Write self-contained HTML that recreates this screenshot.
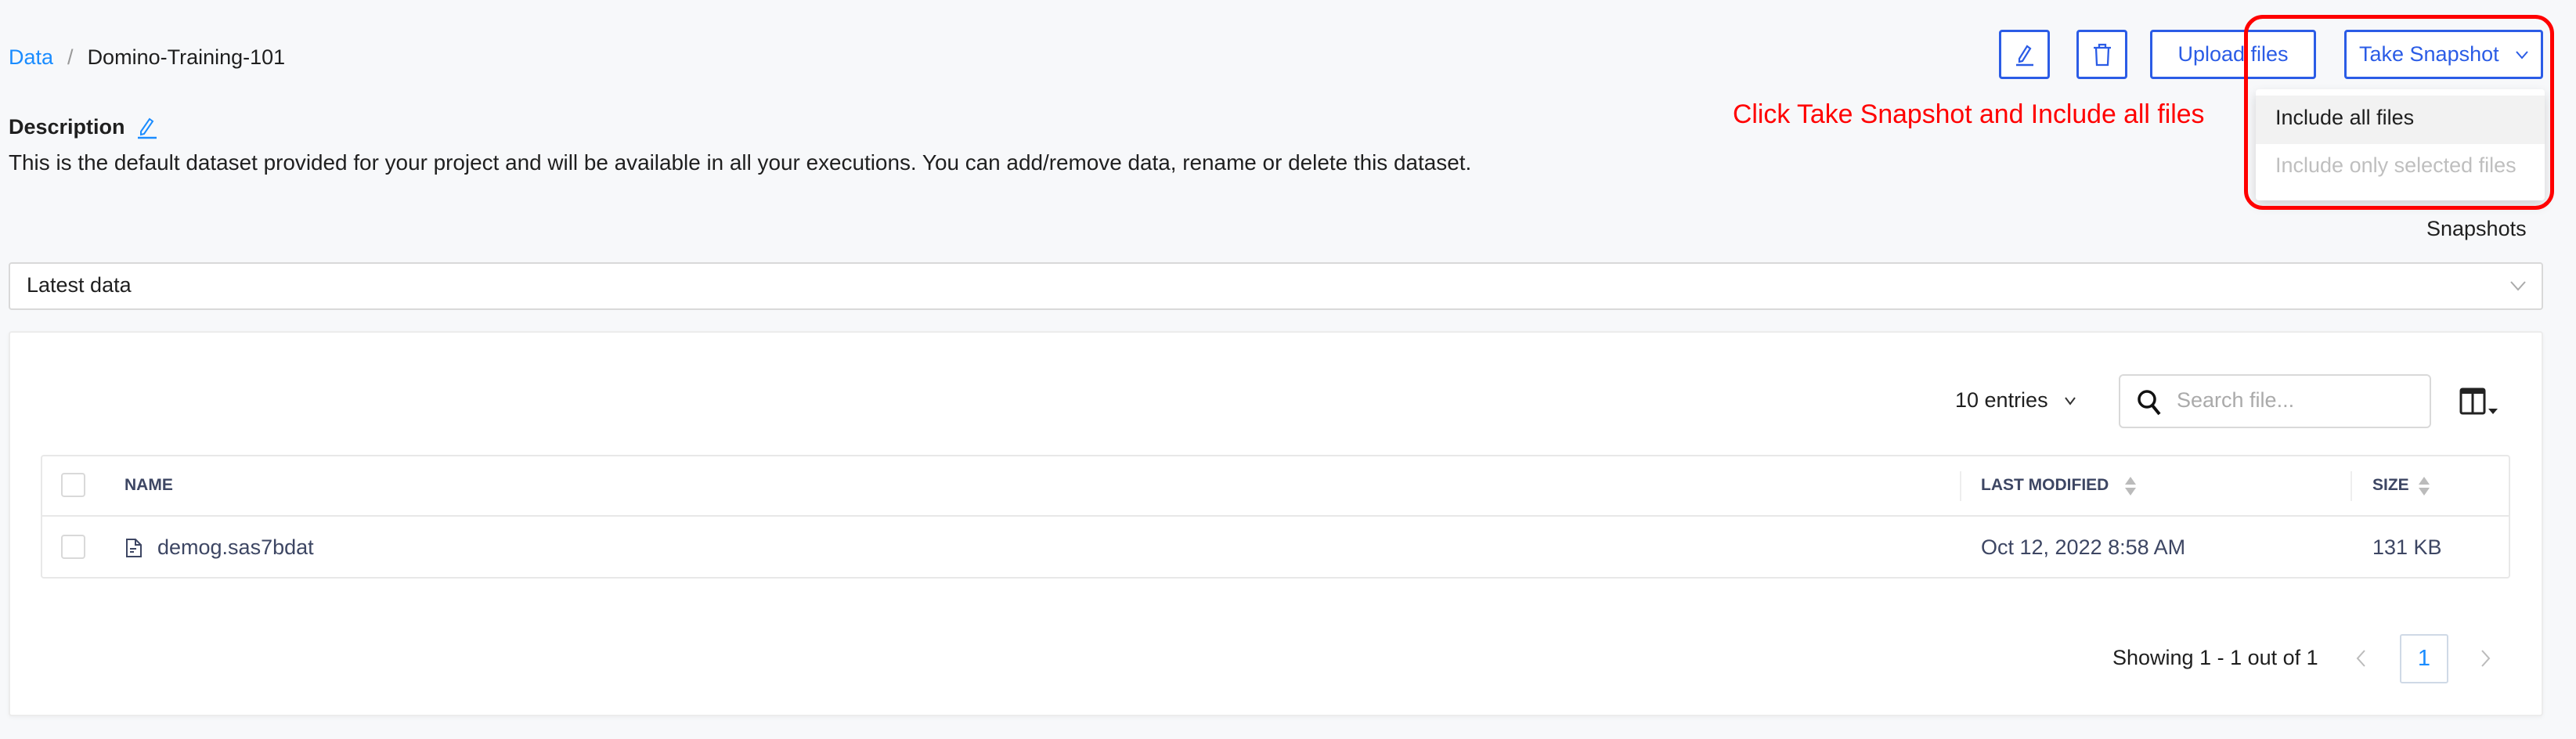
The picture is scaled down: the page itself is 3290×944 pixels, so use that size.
<!DOCTYPE html>
<html><head><meta charset="utf-8"><style>
*{box-sizing:border-box;margin:0;padding:0}
body{width:3290px;height:944px;background:#f7f8fa;font-family:"Liberation Sans",sans-serif;color:#1f1f1f;position:relative;overflow:hidden}
.a{position:absolute;white-space:nowrap}
.btn{position:absolute;border:3px solid #2b5ce6;border-radius:4px;background:#fff;color:#2b5ce6;font-size:27px;display:flex;align-items:center;justify-content:center}
.cb{position:absolute;width:31px;height:31px;border:2px solid #d9d9d9;border-radius:4px;background:#fff}
.th{font-size:21px;font-weight:bold;color:#3d4663}
.td{font-size:27px;color:#3d4663}
</style></head><body>
<div class="a" style="left:11px;top:58px;font-size:27px"><span style="color:#1a8cff">Data</span><span style="color:#999;margin:0 18px">/</span>Domino-Training-101</div>
<div class="a" style="left:11px;top:147px;font-size:27px;font-weight:bold">Description</div>
<svg class="a" style="left:174px;top:148px" width="28" height="30" viewBox="0 0 28 30"><path d="M6 20 L17 4 L21 7 L10 23 L6 24Z" fill="none" stroke="#1a8cff" stroke-width="2"/><path d="M2 28H26" stroke="#1a8cff" stroke-width="2.5"/></svg>
<div class="a" style="left:11px;top:192px;font-size:27.9px">This is the default dataset provided for your project and will be available in all your executions. You can add/remove data, rename or delete this dataset.</div>

<div class="btn" style="left:2553px;top:38px;width:65px;height:63px"><svg width="28" height="30" viewBox="0 0 28 30"><path d="M7 20 L17 4 L21 7 L11 23 L7 24Z" fill="none" stroke="#2b5ce6" stroke-width="2.2"/><path d="M3 28H25" stroke="#2b5ce6" stroke-width="2.5"/></svg></div>
<div class="btn" style="left:2652px;top:38px;width:65px;height:63px"><svg width="26" height="32" viewBox="0 0 26 32"><path d="M2 7H24M9 7V3H17V7M5 7L6 29H20L21 7" fill="none" stroke="#2b5ce6" stroke-width="2.3"/></svg></div>
<div class="btn" style="left:2746px;top:38px;width:212px;height:63px">Upload files</div>
<div class="btn" style="left:2994px;top:38px;width:254px;height:63px;justify-content:flex-start;padding-left:16px">Take Snapshot<svg style="margin-left:20px" width="18" height="12" viewBox="0 0 18 12"><path d="M2 2L9 10L16 2" fill="none" stroke="#2b5ce6" stroke-width="2"/></svg></div>

<div class="a" style="left:2213px;top:127px;font-size:33.8px;color:#f00">Click Take Snapshot and Include all files</div>
<div class="a" style="left:2881px;top:114px;width:369px;height:142px;background:#fff;border-radius:4px;box-shadow:0 6px 14px rgba(0,0,0,.15)">
 <div style="position:absolute;left:0;top:8px;width:369px;height:62px;background:#f2f2f2"></div>
 <div class="a" style="left:25px;top:21px;font-size:27px;color:#1f1f1f">Include all files</div>
 <div class="a" style="left:25px;top:82px;font-size:27px;color:#bfbfbf">Include only selected files</div>
</div>
<div class="a" style="left:2866px;top:19px;width:396px;height:249px;border:5px solid #f00;border-radius:24px"></div>
<div class="a" style="left:3099px;top:277px;font-size:27px">Snapshots</div>

<div class="a" style="left:11px;top:335px;width:3237px;height:61px;background:#fff;border:2px solid #d9d9d9;border-radius:4px"></div>
<div class="a" style="left:34px;top:349px;font-size:27px">Latest data</div>
<svg class="a" style="left:3205px;top:358px" width="22" height="14" viewBox="0 0 22 14"><path d="M2 2L11 12L20 2" fill="none" stroke="#aaa" stroke-width="2"/></svg>

<div class="a" style="left:11px;top:423px;width:3237px;height:492px;background:#fff;border:2px solid #ececec;border-radius:4px;box-shadow:0 2px 6px rgba(0,0,0,.04)"></div>
<div class="a" style="left:2497px;top:496px;font-size:27px">10 entries</div>
<svg class="a" style="left:2636px;top:506px" width="16" height="12" viewBox="0 0 16 12"><path d="M2 2L8 10L14 2" fill="none" stroke="#333" stroke-width="2"/></svg>
<div class="a" style="left:2706px;top:478px;width:399px;height:69px;border:2px solid #d9d9d9;border-radius:6px;background:#fff"></div>
<svg class="a" style="left:2728px;top:496px" width="34" height="36" viewBox="0 0 34 36"><circle cx="14" cy="14" r="10" fill="none" stroke="#111" stroke-width="3.5"/><path d="M21 22L30 33" stroke="#111" stroke-width="4"/></svg>
<div class="a" style="left:2780px;top:496px;font-size:27px;color:#aaa">Search file...</div>
<svg class="a" style="left:3141px;top:494px" width="52" height="40" viewBox="0 0 52 40"><rect x="2" y="3" width="30" height="31" rx="2" fill="none" stroke="#222" stroke-width="3"/><rect x="2" y="3" width="30" height="6" fill="#222"/><path d="M17 8V34" stroke="#222" stroke-width="3"/><path d="M37 28H49L43 35Z" fill="#222"/></svg>

<div class="a" style="left:52px;top:581px;width:3154px;height:158px;border:2px solid #e8e8e8;border-radius:4px;background:#fff"></div>
<div class="a" style="left:52px;top:658px;width:3154px;height:2px;background:#e8e8e8"></div>
<div class="cb" style="left:78px;top:604px"></div>
<div class="cb" style="left:78px;top:683px"></div>
<div class="a th" style="left:159px;top:608px">NAME</div>
<div class="a" style="left:2503px;top:602px;width:2px;height:38px;background:#eee"></div>
<div class="a" style="left:3002px;top:602px;width:2px;height:38px;background:#eee"></div>
<div class="a th" style="left:2530px;top:608px">LAST MODIFIED</div>
<svg class="a" style="left:2713px;top:608px" width="16" height="26" viewBox="0 0 16 26"><path d="M8 1L15 11H1Z" fill="#bbb"/><path d="M8 25L15 15H1Z" fill="#bbb"/></svg>
<div class="a th" style="left:3030px;top:608px">SIZE</div>
<svg class="a" style="left:3088px;top:608px" width="16" height="26" viewBox="0 0 16 26"><path d="M8 1L15 11H1Z" fill="#bbb"/><path d="M8 25L15 15H1Z" fill="#bbb"/></svg>
<svg class="a" style="left:160px;top:687px" width="22" height="26" viewBox="0 0 22 26"><path d="M2 2H13L20 9V24H2Z" fill="none" stroke="#3d4663" stroke-width="2"/><path d="M13 2V9H20M6 14H14M6 18H11" fill="none" stroke="#3d4663" stroke-width="2"/></svg>
<div class="a td" style="left:201px;top:684px">demog.sas7bdat</div>
<div class="a td" style="left:2530px;top:684px">Oct 12, 2022 8:58 AM</div>
<div class="a td" style="left:3030px;top:684px">131 KB</div>

<div class="a" style="left:2698px;top:825px;font-size:27px">Showing 1 - 1 out of 1</div>
<svg class="a" style="left:3008px;top:829px" width="14" height="24" viewBox="0 0 14 24"><path d="M12 2L3 12L12 22" fill="none" stroke="#bbb" stroke-width="2"/></svg>
<div class="a" style="left:3065px;top:810px;width:62px;height:63px;border:2px solid #cfd9e6;border-radius:3px;background:#fff;color:#1a8cff;font-size:29px;text-align:center;line-height:59px">1</div>
<svg class="a" style="left:3168px;top:829px" width="14" height="24" viewBox="0 0 14 24"><path d="M2 2L11 12L2 22" fill="none" stroke="#bbb" stroke-width="2"/></svg>
</body></html>
